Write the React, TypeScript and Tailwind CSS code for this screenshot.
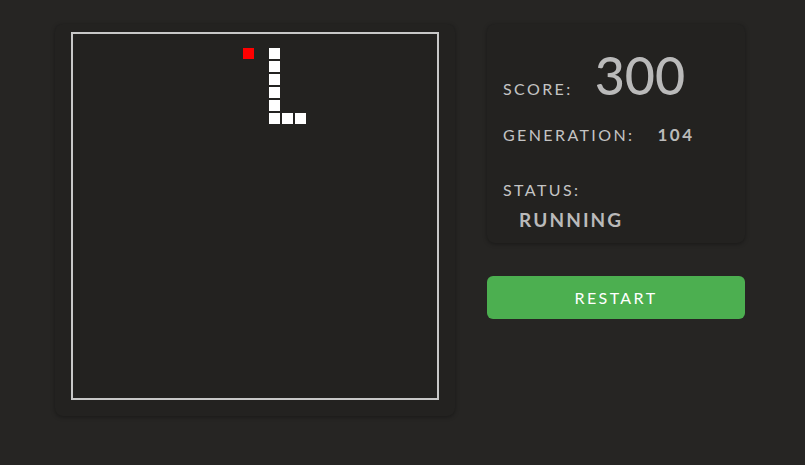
const CELL = 13

const snake: [number, number][] = [
  [15, 1],
  [15, 2],
  [15, 3],
  [15, 4],
  [15, 5],
  [15, 6],
  [16, 6],
  [17, 6],
]
const food: [number, number] = [13, 1]

function Board() {
  return (
    <div className="relative w-[368px] h-[368px] border-2 border-[#c8c8c8]">
      <div
        className="absolute w-[11px] h-[11px] bg-[#ff0000]"
        style={{ left: food[0] * CELL + 1, top: food[1] * CELL + 1 }}
      />
      {snake.map(([x, y], i) => (
        <div
          key={i}
          className="absolute w-[11px] h-[11px] bg-white"
          style={{ left: x * CELL + 1, top: y * CELL + 1 }}
        />
      ))}
    </div>
  )
}

export default function App() {
  return (
    <div
      className="min-h-[465px] w-full bg-[#262523] text-[#c4c4c4]"
      style={{ fontFamily: 'Lato, "Noto Sans", sans-serif' }}
    >
      <div className="flex items-start gap-8 pl-[55px] pt-6">
        <div className="w-[400px] rounded-lg bg-[#232220] px-4 pt-2 pb-4 shadow-[0_1px_4px_rgba(0,0,0,0.35)]">
          <Board />
        </div>

        <div className="w-[258px] flex flex-col">
          <div className="h-[219px] rounded-lg bg-[#232220] px-4 pt-[21px] shadow-[0_1px_4px_rgba(0,0,0,0.35)]">
            <div className="flex items-baseline h-[60px]">
              <span className="text-[16px] leading-[20px] tracking-[2.4px]">SCORE:</span>
              <span className="ml-[22px] text-[52px] font-medium leading-[60px] text-[#bababa]">300</span>
            </div>
            <div className="mt-[18px] flex items-baseline leading-[24px]">
              <span className="text-[16px] tracking-[2.4px]">GENERATION:</span>
              <span className="ml-[23px] text-[17px] font-bold tracking-[2.5px] text-[#bababa]">104</span>
            </div>
            <div className="mt-[31px] text-[16px] leading-[24px] tracking-[2.4px]">STATUS:</div>
            <div className="mt-1 pl-4 text-[19px] font-bold leading-[28px] tracking-[2.1px] text-[#bababa]">
              RUNNING
            </div>
          </div>

          <button className="mt-[33px] h-[43px] w-full rounded-md bg-[#4caf50] text-[16px] tracking-[2.4px] text-white">
            RESTART
          </button>
        </div>
      </div>
    </div>
  )
}
